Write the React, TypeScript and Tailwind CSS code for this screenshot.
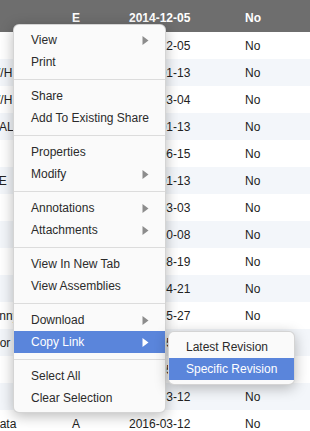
import React from "react";

type Row = { name: string; shift: string; rev: string; date: string; flag: string };

// col 2 is hidden behind the menu on most rows, so only the visible ones carry text
const ROWS: Row[] = [
  { name: "", shift: "", rev: "", date: "2014-12-05", flag: "No" },
  { name: "W/H", shift: "-ml-[11px]", rev: "", date: "2015-01-13", flag: "No" },
  { name: "W/H", shift: "-ml-[11px]", rev: "", date: "2015-03-04", flag: "No" },
  { name: "ALL", shift: "-ml-[1px]", rev: "", date: "2015-01-13", flag: "No" },
  { name: "", shift: "", rev: "", date: "2015-06-15", flag: "No" },
  { name: "NONE", shift: "-ml-[28px]", rev: "", date: "2015-01-13", flag: "No" },
  { name: "", shift: "", rev: "", date: "2015-03-03", flag: "No" },
  { name: "", shift: "", rev: "", date: "2015-10-08", flag: "No" },
  { name: "", shift: "", rev: "", date: "2015-08-19", flag: "No" },
  { name: "", shift: "", rev: "", date: "2015-04-21", flag: "No" },
  { name: "Johnny", shift: "-ml-[20px]", rev: "", date: "2015-05-27", flag: "No" },
  { name: "Editor", shift: "-ml-[21px]", rev: "", date: "2015-05-27", flag: "" },
  { name: "", shift: "", rev: "", date: "2016-05-12", flag: "" },
  { name: "", shift: "", rev: "", date: "2016-03-12", flag: "No" },
  { name: "Data", shift: "-ml-[9px]", rev: "A", date: "2016-03-12", flag: "No" },
];

type Item = { label: string; sub?: boolean; active?: boolean } | "sep";

const MENU: Item[] = [
  { label: "View", sub: true },
  { label: "Print" },
  "sep",
  { label: "Share" },
  { label: "Add To Existing Share" },
  "sep",
  { label: "Properties" },
  { label: "Modify", sub: true },
  "sep",
  { label: "Annotations", sub: true },
  { label: "Attachments", sub: true },
  "sep",
  { label: "View In New Tab" },
  { label: "View Assemblies" },
  "sep",
  { label: "Download", sub: true },
  { label: "Copy Link", sub: true, active: true },
  "sep",
  { label: "Select All" },
  { label: "Clear Selection" },
];

function Arrow({ white }: { white?: boolean }) {
  return (
    <svg width="7" height="9" viewBox="0 0 7 9" className="shrink-0">
      <path d="M0.5 0 L6.5 4.5 L0.5 9 Z" fill={white ? "#ffffff" : "#8c8c8c"} />
    </svg>
  );
}

export default function App() {
  return (
    <div
      className="relative h-[431px] w-[310px] overflow-hidden bg-white text-[12px] text-[#222]"
      style={{ fontFamily: '"Liberation Sans", Arial, sans-serif' }}
    >
      {/* table */}
      <div className="grid h-[32px] grid-cols-[72px_57px_116px_65px] items-center bg-[#6e6e6e] pt-[3px] font-bold text-white">
        <div />
        <div>E</div>
        <div>2014-12-05</div>
        <div>No</div>
      </div>
      {ROWS.map((r, i) => (
        <div
          key={i}
          className={
            "grid h-[27px] grid-cols-[72px_57px_116px_65px] items-center " +
            (i % 2 === 0 ? "bg-white" : "bg-[#f3f6fa]")
          }
        >
          <div className="whitespace-nowrap">
            <span className={"inline-block " + r.shift}>{r.name}</span>
          </div>
          <div>{r.rev}</div>
          <div>{r.date}</div>
          <div>{r.flag}</div>
        </div>
      ))}

      {/* context menu */}
      <div className="absolute left-[13px] top-[24px] w-[153px] rounded-[6px] border border-black/15 bg-[#fafafa] pb-[3px] pt-[4px] text-[#2b2b2b] shadow-[0_3px_14px_rgba(0,0,0,0.28)]">
        {MENU.map((it, i) =>
          it === "sep" ? (
            <div key={i} className="flex h-[12px] items-center">
              <div className="h-px w-full bg-[#dcdcdc]" />
            </div>
          ) : (
            <div
              key={i}
              className={
                "flex h-[22px] items-center justify-between pl-[17px] pr-[16px] " +
                (it.active ? "bg-[#5a85db] text-white" : "")
              }
            >
              <span>{it.label}</span>
              {it.sub && <Arrow white={it.active} />}
            </div>
          )
        )}
      </div>

      {/* submenu */}
      <div className="absolute left-[168px] top-[331px] w-[127px] rounded-[6px] border border-black/15 bg-[#fafafa] py-[4px] text-[#2b2b2b] shadow-[0_3px_14px_rgba(0,0,0,0.28)]">
        <div className="flex h-[22px] items-center pl-[17px]">Latest Revision</div>
        <div className="flex h-[22px] items-center bg-[#5a85db] pl-[17px] text-white">Specific Revision</div>
      </div>
    </div>
  );
}
